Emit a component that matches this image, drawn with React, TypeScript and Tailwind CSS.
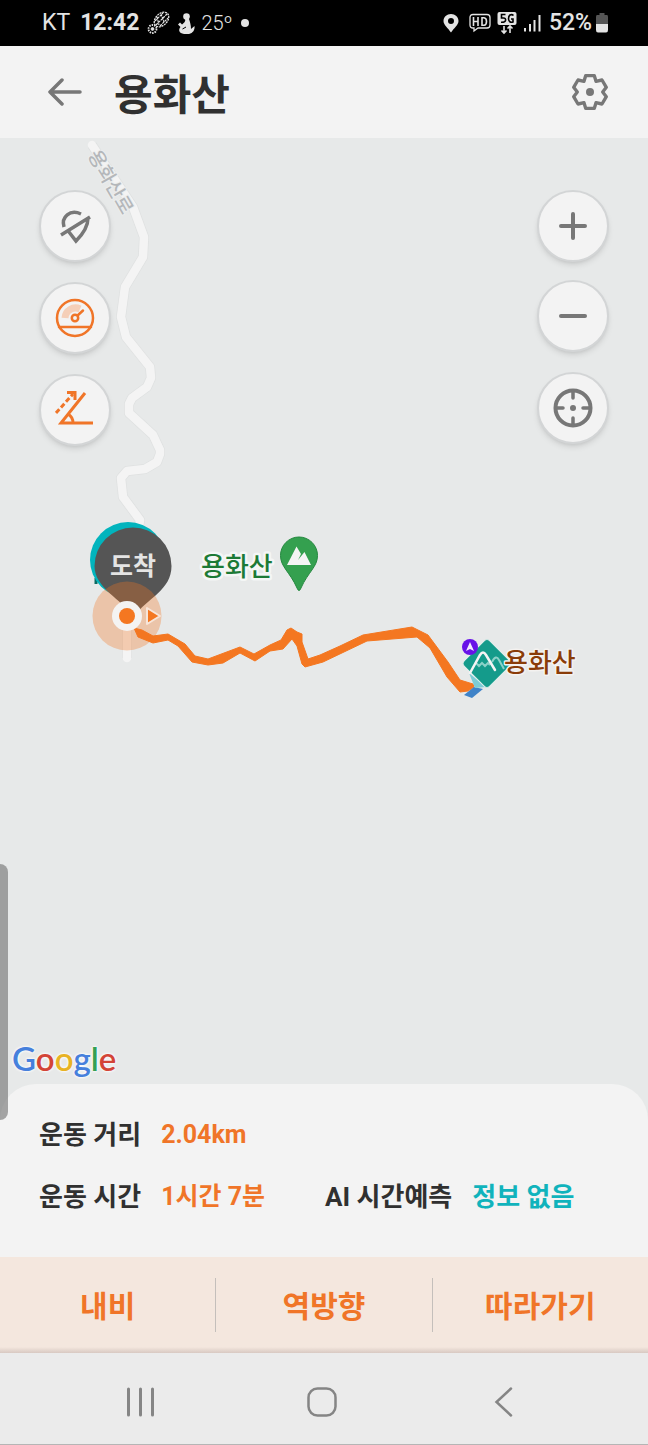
import type { ReactNode } from 'react';

const gear =
  'M-13 -49H13L18 -32L36 -36L49 -14L38 0L49 14L36 36L18 32L13 49H-13L-18 32L-36 36L-49 14L-38 0L-49 -14L-36 -36L-18 -32Z';

const road =
  'M92 145L133 207L144 237L143 257L125 287L121 317L126 337L150 367L151 378L147 387L132 398L129 404V413L153 435L160 450V454L157 462L145 469L127 471L121 478L123 497L140 520L127 600V658';

const trail =
  'M134 628L142 630L153 636L168 634L185 644L195 656L208 659L240 647L254 654L270 645L281 640L287 630L291 628L297 632L302 634V642L308 659L320 655L340 646L363 635L412 627L428 635L448 662L460 680L473 684L474 687L468 691L460 692L447 677L430 648L417 637L367 641L323 662L305 667L302 664L297 646L292 639L283 649L270 651L255 661L240 653L223 663L208 665L192 662L178 646L168 640L153 643L138 637Z';

function StatusBar() {
  return (
    <div className="flex h-[46px] items-center justify-between bg-black pl-[42px] pr-10 text-[#e4e4e4]">
      <div className="flex items-center text-[23px] leading-7">
        <span>KT</span>
        <span className="ml-2.5 font-bold">12:42</span>
        <svg className="ml-2 h-6 w-6" viewBox="0 0 24 24" fill="none" stroke="currentColor">
          <circle cx="5.500" cy="18" r="4" strokeWidth="1.800" strokeDasharray="1.500 1" />
          <circle cx="5.500" cy="18" r="1.400" fill="currentColor" />
          <ellipse cx="14.500" cy="8.500" rx="8.500" ry="5.800" strokeWidth="1.300" strokeDasharray="2 0.800" transform="rotate(-45 14.500 8.500)" />
          <path d="M9 14L20 3M8 10L16 2M13 15L21 7M10 6L12 14M14 3L17 11" strokeWidth="1.200" strokeDasharray="2.500 0.800" />
        </svg>
        <svg className="ml-1.5 h-6 w-[18px]" viewBox="0 0 18 24" fill="currentColor">
          <circle cx="9.500" cy="5.500" r="3.300" />
          <path d="M8 8C9 10 7 12 5 13.500L3 11.500L1 13.500L3.500 16C1 19 2 22 7 23H12C16 22 18 19 17.500 15L14 18C14 14 13 11 12 8Z" />
          <path d="M5.500 18L9 16" stroke="#000" strokeWidth="1" />
        </svg>
        <span className="ml-1.5 text-xl font-light">25º</span>
        <span className="ml-2 h-2 w-2 rounded-full bg-[#e4e4e4]" />
      </div>
      <div className="flex items-center">
        <svg className="h-5 w-4" viewBox="0 0 16 20" fill="currentColor">
          <path fillRule="evenodd" d="M8 1C3.800 1 0.500 4 0.500 8C0.500 12 5 15 8 19.500C11 15 15.500 12 15.500 8C15.500 4 12.200 1 8 1ZM8 5A3 3 0 1 1 8 11A3 3 0 1 1 8 5Z" />
        </svg>
        <svg className="ml-2.5 h-5 w-[22px]" viewBox="0 0 22 20" fill="none" stroke="currentColor" strokeWidth="1.300">
          <path d="M4 1.500H18Q21 1.500 21 4.500V12Q21 15 18 15H9L5 18V15H4Q1 15 1 12V4.500Q1 1.500 4 1.500Z" />
          <path d="M4.500 4V13M9 4V13M4.500 8.500H9M13 4.700V12.300H15Q17.500 12 17.500 8.500Q17.500 5 15 4.700Z" strokeWidth="1.600" />
        </svg>
        <svg className="ml-1.5 h-6 w-5" viewBox="0 0 20 24" fill="none">
          <rect x="0.500" y="1" width="19" height="13" rx="2" fill="currentColor" />
          <path d="M8.500 3.500H4.500V7H6.500Q9 7 8.500 9.500Q8 11.500 4 11.300M16.500 4.500Q15 3 13 4Q11.500 5 11.500 8Q12 12 16 11V8H14" stroke="#000" strokeWidth="1.600" />
          <path d="M7 15V22M4.500 19.500L7 22L9.500 19.500M13 22V15M10.500 17.500L13 15L15.500 17.500" stroke="currentColor" strokeWidth="1.600" />
        </svg>
        <svg className="ml-1.5 h-[18px] w-[18px]" viewBox="0 0 18 18" fill="none" stroke="currentColor" strokeWidth="2">
          <path d="M2 14V17.500M7 10V17.500M11.500 6V17.500M16.500 1V17.500" />
        </svg>
        <span className="ml-2 text-[23px] font-medium leading-7">52%</span>
        <svg className="ml-1 h-5 w-3" viewBox="0 0 12 20">
          <path d="M3.500 0H8.500V2H11Q12 2 12 4V11H0V4Q0 2 1 2H3.500Z" fill="#555" />
          <path d="M0 11H12V17Q12 19.500 10 19.500H2Q0 19.500 0 17Z" fill="#e4e4e4" />
        </svg>
      </div>
    </div>
  );
}

function Header() {
  return (
    <header className="flex h-[92px] items-center bg-[#f3f3f3] pl-12 pr-[39px]">
      <button type="button" aria-label="뒤로" className="text-[#777]">
        <svg className="h-[30px] w-[34px]" viewBox="0 0 34 30" fill="none" stroke="currentColor" strokeWidth="3.500" strokeLinecap="round" strokeLinejoin="round">
          <path d="M32 15H2M14 3L2 15L14 27" />
        </svg>
      </button>
      <h1 className="ml-8 pt-2 text-[42px] font-bold leading-[60px] text-[#303030]">용화산</h1>
      <button type="button" aria-label="설정" className="ml-auto text-[#777]">
        <svg className="h-[38px] w-[38px]" viewBox="-57 -57 114 114" fill="none" stroke="currentColor" strokeWidth="10" strokeLinejoin="round">
          <path d={gear} />
          <circle r="12" fill="currentColor" stroke="none" />
        </svg>
      </button>
    </header>
  );
}

function MapButton({ label, children }: { label: string; children: ReactNode }) {
  return (
    <button
      type="button"
      aria-label={label}
      className="flex h-[72px] w-[72px] items-center justify-center rounded-full border-2 border-[#d3d5d6] bg-[#f3f3f3] text-[#777] shadow-md"
    >
      <svg className="h-10 w-10" viewBox="0 0 40 40" fill="none" stroke="currentColor" strokeWidth="4" strokeLinecap="round">
        {children}
      </svg>
    </button>
  );
}

function MapCanvas() {
  return (
    <svg
      className="absolute inset-0 h-full w-full"
      viewBox="0 138 648 982"
      preserveAspectRatio="xMidYMin slice"
      fill="none"
    >
      <path d={road} stroke="#dfe1e1" strokeWidth="10" strokeLinejoin="round" />
      <path d={road} stroke="#f4f4f4" strokeWidth="8.500" strokeLinejoin="round" strokeLinecap="round" />
      <g transform="translate(91 153) rotate(60)">
        <text fontSize="19" fontWeight="500" fill="#b4b7ba" stroke="#eceeee" strokeWidth="2" paintOrder="stroke" y="4">
          용화산로
        </text>
      </g>

      <path d={trail} fill="#f47721" stroke="#f47721" strokeLinejoin="round" />

      {/* start and finish pins */}
      <path d="M96 578V584" stroke="#0b6b62" strokeWidth="3" />
      <circle cx="128" cy="560" r="38" fill="#02b4bd" />
      <path d="M94.500 566A38.500 38.500 0 1 1 171.500 566C171.500 590 148 598 134 616C122 600 94.500 588 94.500 566Z" fill="#555" />
      <text x="133" y="575" fontSize="25" fontWeight="700" fill="#e4e4e4" textAnchor="middle">
        도착
      </text>
      <circle cx="127" cy="616" r="34.500" fill="#f47721" fillOpacity="0.320" />
      <path d="M147 608V624L160 616Z" fill="#f47721" stroke="#f7e5d9" strokeWidth="2" strokeLinejoin="round" />
      <circle cx="127" cy="616" r="15" fill="#f4f3f2" />
      <circle cx="127" cy="616" r="8" fill="#f47721" />

      {/* peak */}
      <text x="201" y="576" fontSize="26" fontWeight="500" fill="#1c7a36" stroke="#f4f6f5" strokeWidth="5" strokeLinejoin="round" paintOrder="stroke">
        용화산
      </text>
      <path d="M280.500 555.500A18.500 18.500 0 1 1 317.500 555.500C317.500 567 308 572 301 588Q299 593 297 588C290 572 280.500 567 280.500 555.500Z" fill="#34a04f" stroke="#23883e" />
      <path d="M287 565L296.500 546.500L301 554L298 560L304.500 552L311 565Z" fill="#f4f4f4" />

      {/* trail head */}
      <path d="M464 695L474 687L483 689L472 698Z" fill="#3f83c8" />
      <path d="M469 673L486 687L475 688Z" fill="#7dccd6" />
      <rect x="-18" y="-18" width="36" height="36" rx="4" fill="#149b8b" stroke="#e3efed" transform="translate(487 663.500) rotate(45)" />
      <path d="M476 663L479 666L482 663L485 666L488 663L490 665M492 662Q496 654 499 660L504 669" stroke="#8bd1c8" strokeWidth="2" />
      <path d="M470 673L480 655Q483 650 486 655L495 670" stroke="#f4f4f4" strokeWidth="2.500" strokeLinecap="round" />
      <circle cx="470" cy="647" r="8" fill="#6812e8" />
      <path d="M470 642L474 651L470 649L466 651Z" fill="#f3eaff" />
      <text x="504" y="672" fontSize="26" fontWeight="500" fill="#8a3c08" stroke="#f4f2f0" strokeWidth="3" strokeLinejoin="round" paintOrder="stroke">
        용화산
      </text>
    </svg>
  );
}

function MapView() {
  return (
    <main className="relative -mb-9 flex min-h-[982px] flex-1 flex-col justify-between bg-[#e7e9e9]">
      <MapCanvas />
      <div className="relative flex items-start justify-between px-[39px] pt-[52px]">
        <div className="flex flex-col gap-5">
          <MapButton label="위치 끄기">
            <path d="M9 21C6 11 15 3 26 8M14 26L21 35C26 30 33 22 33 12M6 29L35 11" strokeWidth="3.500" strokeLinecap="butt" />
          </MapButton>
          <MapButton label="속도">
            <g stroke="#f07528" strokeWidth="2.500">
              <path d="M10 20A10.500 10.500 0 0 1 25 11" stroke="#f5cfb8" strokeWidth="7" strokeLinecap="butt" />
              <circle cx="20" cy="20" r="18" />
              <path d="M4 29H36M22 18L28 12.500" />
              <circle cx="20" cy="20" r="3.200" fill="#f3f3f3" />
            </g>
          </MapButton>
          <MapButton label="경사도">
            <g stroke="#f07528" strokeWidth="3" strokeLinecap="butt">
              <path d="M30 3L6 33H38M13 24Q18 27 18 33" />
              <path d="M1 23L18 4" strokeDasharray="5 2.500" />
              <path d="M12 2.500H20V10" />
            </g>
          </MapButton>
        </div>
        <div className="flex flex-col gap-5">
          <div className="flex flex-col gap-[18px]">
            <MapButton label="확대">
              <path d="M20 8V32M8 20H32" />
            </MapButton>
            <MapButton label="축소">
              <path d="M8 20H32" />
            </MapButton>
          </div>
          <MapButton label="현재 위치">
            <circle cx="20" cy="20" r="17.500" />
            <path d="M20 4V10M20 30V36M4 20H10M30 20H36" strokeWidth="3.500" />
            <circle cx="20" cy="20" r="3" fill="currentColor" stroke="none" />
          </MapButton>
        </div>
      </div>
      <div className="relative pb-[42px] pl-3 font-['Lato',sans-serif] text-[33px] font-semibold leading-10 [text-shadow:0_0_3px_#fff,0_0_3px_#fff]">
        <span className="text-[#4680dc]">G</span>
        <span className="text-[#d34437]">o</span>
        <span className="text-[#e8b325]">o</span>
        <span className="text-[#4680dc]">g</span>
        <span className="text-[#35a052]">l</span>
        <span className="text-[#d34437]">e</span>
      </div>
      <div className="absolute bottom-0 left-0 z-10 h-64 w-2 rounded-r-lg bg-[#6e6e6e]/60" />
    </main>
  );
}

function Stat({ label, value, tone }: { label: string; value: string; tone: string }) {
  return (
    <div className="flex gap-5">
      <dt className="text-[26px] text-[#303030]">{label}</dt>
      <dd className={tone}>{value}</dd>
    </div>
  );
}

function StatsPanel() {
  return (
    <dl className="relative flex flex-col gap-8 rounded-t-[36px] bg-[#f3f3f3] px-[39px] pb-[45px] pt-9 font-bold leading-[30px]">
      <Stat label="운동 거리" value="2.04km" tone="text-[25px] text-[#f07528]" />
      <div className="flex gap-[60px]">
        <Stat label="운동 시간" value="1시간 7분" tone="text-[25px] text-[#f07528]" />
        <Stat label="AI 시간예측" value="정보 없음" tone="text-[26px] text-[#10b3bc]" />
      </div>
    </dl>
  );
}

function ActionBar() {
  const actions = ['내비', '역방향', '따라가기'];
  return (
    <div className="bg-[#f4e7de]">
      <div className="flex h-[90px] items-center pt-1.5">
        {actions.map((action) => (
          <button
            key={action}
            type="button"
            className="h-[54px] flex-1 border-r border-[#c4bfbb] pt-0.5 text-[30px] font-bold text-[#f07528] last:border-r-0"
          >
            {action}
          </button>
        ))}
      </div>
      <div className="h-1.5 bg-linear-to-b from-[#f4e7de] to-[#d8c9c2]" />
    </div>
  );
}

function SystemNav() {
  return (
    <nav className="flex h-[92px] items-center justify-between border-b border-[#b5b5b5] bg-[#ebebeb] pl-[125px] pr-[129px] pt-1.5 text-[#858585]">
      <button type="button" aria-label="최근 앱">
        <svg className="h-[30px] w-[30px]" viewBox="0 0 30 30" fill="none" stroke="currentColor" strokeWidth="3" strokeLinecap="round">
          <path d="M3.500 2V28M15.500 2V28M27.500 2V28" />
        </svg>
      </button>
      <button type="button" aria-label="홈">
        <svg className="h-[30px] w-[30px]" viewBox="0 0 30 30" fill="none" stroke="currentColor" strokeWidth="2.500">
          <rect x="1.500" y="1.500" width="27" height="27" rx="9" />
        </svg>
      </button>
      <button type="button" aria-label="이전">
        <svg className="h-[30px] w-[30px]" viewBox="0 0 30 30" fill="none" stroke="currentColor" strokeWidth="2.500" strokeLinecap="round">
          <path d="M22 1.500L7.500 15L22 28.500" />
        </svg>
      </button>
    </nav>
  );
}

export default function App() {
  return (
    <div className="flex min-h-screen flex-col bg-[#ebebeb] font-['Roboto','Noto_Sans_CJK_KR',sans-serif]">
      <StatusBar />
      <Header />
      <MapView />
      <StatsPanel />
      <ActionBar />
      <SystemNav />
    </div>
  );
}
